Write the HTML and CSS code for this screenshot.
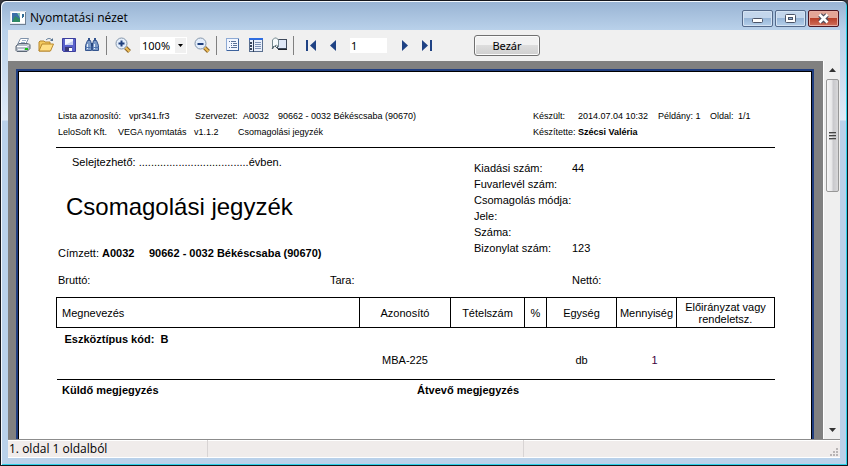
FILE: index.html
```html
<!DOCTYPE html>
<html lang="hu">
<head>
  <meta charset="UTF-8">
  <meta name="viewport" content="width=device-width, initial-scale=1.0">
  <title>Nyomtatási nézet</title>
  <link rel="stylesheet" href="styles.css">
</head>
<body>
  <div class="window">
    <header class="titlebar">
      <svg class="app-icon" width="16" height="14" viewBox="0 0 16 14">
        <rect x="0.5" y="0.5" width="15" height="12" fill="#fff" stroke="#e4e8ee"/>
        <path d="M0 13.500h16M15.500 1v13" stroke="#6e7f92"/>
        <rect x="2" y="2" width="8" height="9" fill="#3b6fa8"/>
        <path d="M2 11l3-6 5 3v3z" fill="#2f8a64"/>
        <path d="M7 2h3v5z" fill="#7fbfae"/>
        <path d="M12 3h2v3h-1v1h-1z" fill="#2f6a94"/>
      </svg>
      <h1 class="window-title">Nyomtatási nézet</h1>
      <div class="window-buttons">
        <button class="win-btn" aria-label="Kis méret">
          <svg width="29" height="15" viewBox="0 0 29 15"><rect x="9.500" y="7.500" width="10" height="4" rx="1" fill="#fff" stroke="#4b5468"/></svg>
        </button>
        <button class="win-btn" aria-label="Teljes méret">
          <svg width="29" height="15" viewBox="0 0 29 15"><rect x="9.500" y="3.500" width="10" height="8" rx="1" fill="#fff" stroke="#4b5468"/><rect x="12.500" y="6.500" width="4" height="2" fill="#8fb0d4" stroke="#4b5468"/></svg>
        </button>
        <button class="win-btn win-close" aria-label="Bezárás">
          <svg width="29" height="15" viewBox="0 0 29 15"><path d="M11 4l7 7M18 4l-7 7" stroke="#4b4a5a" stroke-width="5"/><path d="M10.500 3.500l8 8M18.500 3.500l-8 8" stroke="#fff" stroke-width="2.600"/></svg>
        </button>
      </div>
    </header>

    <nav class="toolbar">
      <button class="tool" aria-label="Nyomtatás">
        <svg width="16" height="16" viewBox="0 0 16 16">
          <path d="M5.500 1.500h8l-3 6h-8z" fill="#fff" stroke="#7f92aa"/>
          <path d="M7 3.500h4M6 5.500h4" stroke="#9db2ca"/>
          <path d="M1 9l3-2.500h8l3 1v4l-3 3H2l-1-1z" fill="#b4bdc9" stroke="#5b6675"/>
          <path d="M2 9.500h10l2-2" stroke="#fff" fill="none"/>
          <path d="M3 12.500h6" stroke="#f2f4f7"/>
          <rect x="10" y="11" width="3" height="2" fill="#15c415"/>
        </svg>
      </button>
      <button class="tool" aria-label="Megnyitás">
        <svg width="16" height="16" viewBox="0 0 16 16">
          <path d="M1 14V5l1-1h4l1 1h5v9z" fill="#f3c95e" stroke="#b8872c"/>
          <path d="M1 14l3-7h11.500l-3 7z" fill="#ffdf85" stroke="#b8872c"/>
          <path d="M8 3c2-2 4-2 6 0" fill="none" stroke="#55718f"/>
          <path d="M12 4h3V1z" fill="#55718f"/>
        </svg>
      </button>
      <button class="tool" aria-label="Mentés">
        <svg width="16" height="16" viewBox="0 0 16 16">
          <path d="M1.500 1.500h13v13h-12l-1-1z" fill="#5a62cc" stroke="#3c3f9c"/>
          <rect x="4" y="2" width="8" height="6" fill="#f4f7ff"/>
          <path d="M4 8h8V4z" fill="#c9d3f2"/>
          <rect x="4" y="10" width="7" height="4" fill="#3a3b78"/>
          <rect x="8" y="11" width="3" height="3" fill="#fff"/>
        </svg>
      </button>
      <button class="tool" aria-label="Keresés">
        <svg width="16" height="16" viewBox="0 0 16 16">
          <path d="M3.500 3.500h3l1 4v6h-6v-5zM12.500 3.500h-3l-1 4v6h6v-5z" fill="#7b9ac8" stroke="#34558f"/>
          <path d="M4 1h2v2H4zM10 1h2v2h-2z" fill="#34558f"/>
          <path d="M7 6h2v3H7z" fill="#27477f"/>
          <path d="M3.500 7v5M10.500 7v5" stroke="#e4edf9"/>
          <path d="M1.500 10.500h5M9.500 10.500h5" stroke="#4f74b0"/>
        </svg>
      </button>
      <span class="sep"></span>
      <button class="tool" aria-label="Nagyítás">
        <svg width="16" height="16" viewBox="0 0 16 16">
          <path d="M10.500 10.500l4 4" stroke="#8a6428" stroke-width="4"/>
          <path d="M10.500 10.500l4 4" stroke="#eebe58" stroke-width="2"/>
          <circle cx="6.500" cy="6.500" r="5.500" fill="#e4eefb" stroke="#8496aa"/>
          <path d="M3.500 6.500h6M6.500 3.500v6" stroke="#1e3f7c" stroke-width="2"/>
        </svg>
      </button>
      <select class="zoom" aria-label="Nagyítás mértéke">
        <option>100%</option>
      </select>
      <button class="tool" aria-label="Kicsinyítés">
        <svg width="16" height="16" viewBox="0 0 16 16">
          <path d="M10.500 10.500l4 4" stroke="#8a6428" stroke-width="4"/>
          <path d="M10.500 10.500l4 4" stroke="#eebe58" stroke-width="2"/>
          <circle cx="6.500" cy="6.500" r="5.500" fill="#e4eefb" stroke="#8496aa"/>
          <path d="M3.500 7h6" stroke="#1e3f7c" stroke-width="2"/>
        </svg>
      </button>
      <span class="sep"></span>
      <button class="tool" aria-label="Vázlat">
        <svg width="16" height="16" viewBox="0 0 16 16">
          <rect x="1.500" y="1.500" width="12" height="12" fill="#f2f6ff" stroke="#8eaad4"/>
          <path d="M13.500 2v12M2 13.500h12" stroke="#3d629c"/>
          <path d="M4 4.500h1M6 4.500h5M6 6.500h1M8 6.500h4M6 8.500h1M8 8.500h4M4 10.500h1M6 10.500h6" stroke="#587198"/>
        </svg>
      </button>
      <button class="tool" aria-label="Miniatűrök">
        <svg width="16" height="16" viewBox="0 0 16 16">
          <rect x="1.500" y="1.500" width="13" height="13" fill="#e8effb" stroke="#5b7090"/>
          <rect x="1" y="1" width="14" height="2" fill="#2f6de0"/>
          <path d="M5.500 3v12" stroke="#2d3d58"/>
          <path d="M2 5h2v2H2zM2 8h2v2H2zM2 11h2v2H2z" fill="#33415a"/>
          <path d="M7 5.500h6M7 7.500h6M7 9.500h6M7 11.500h6" stroke="#7f94b8"/>
        </svg>
      </button>
      <button class="tool" aria-label="Oldalbeállítás">
        <svg width="16" height="16" viewBox="0 0 16 16">
          <rect x="6.500" y="2.500" width="9" height="9" fill="#dfe8f8" stroke="#3f4a5c"/>
          <path d="M7 12.500h9" stroke="#20252e"/>
          <path d="M1.500 12V3l2-2h2l2 2v7l-2-2-2 1z" fill="#f6fafb" stroke="#74888e"/>
          <path d="M1 12l2-3M4 9l3 3" stroke="#4c5d66"/>
        </svg>
      </button>
      <span class="sep"></span>
      <button class="tool" aria-label="Első oldal">
        <svg width="16" height="16" viewBox="0 0 16 16"><path d="M4 3h2v11H4zM14 3v11L8 8.500z" fill="#1f4284"/></svg>
      </button>
      <button class="tool" aria-label="Előző oldal">
        <svg width="16" height="16" viewBox="0 0 16 16"><path d="M11 3v11L5 8.500z" fill="#1f4284"/></svg>
      </button>
      <input class="page-no" type="text" value="1" aria-label="Oldalszám">
      <button class="tool" aria-label="Következő oldal">
        <svg width="16" height="16" viewBox="0 0 16 16"><path d="M5 3v11l6-5.500z" fill="#1f4284"/></svg>
      </button>
      <button class="tool" aria-label="Utolsó oldal">
        <svg width="16" height="16" viewBox="0 0 16 16"><path d="M2 3v11l6-5.500zM10 3h2v11h-2z" fill="#1f4284"/></svg>
      </button>
      <button class="close-btn">Bezár</button>
    </nav>

    <div class="preview">
      <main class="workspace">
        <article class="page">
          <header class="page-head">
            <div class="head-left">
              <div class="row row-list">
                <span>Lista azonosító:</span><span>vpr341.fr3</span><span>Szervezet:</span><span>A0032</span><span>90662 - 0032 Békéscsaba (90670)</span>
              </div>
              <div class="row row-soft">
                <span>LeloSoft Kft.</span><span>VEGA nyomtatás</span><span>v1.1.2</span><span>Csomagolási jegyzék</span>
              </div>
            </div>
            <div class="head-right">
              <div class="row row-made">
                <span>Készült:</span><span>2014.07.04 10:32</span><span>Példány: 1</span><span>Oldal:</span><span>1/1</span>
              </div>
              <div class="row row-made">
                <span>Készítette:</span><b>Szécsi Valéria</b>
              </div>
            </div>
          </header>

          <section class="info">
            <div class="info-left">
              <p class="discard">Selejtezhető: ....................................évben.</p>
              <h2 class="doc-title">Csomagolási jegyzék</h2>
              <p class="recipient"><span>Címzett:</span><b>A0032</b><b>90662 - 0032 Békéscsaba (90670)</b></p>
            </div>
            <dl class="details">
              <dt>Kiadási szám:</dt><dd>44</dd>
              <dt>Fuvarlevél szám:</dt><dd></dd>
              <dt>Csomagolás módja:</dt><dd></dd>
              <dt>Jele:</dt><dd></dd>
              <dt>Száma:</dt><dd></dd>
              <dt>Bizonylat szám:</dt><dd>123</dd>
            </dl>
          </section>

          <div class="weights">
            <span>Bruttó:</span><span>Tara:</span><span>Nettó:</span>
          </div>

          <table class="items">
            <colgroup>
              <col>
              <col class="col-id">
              <col class="col-no">
              <col class="col-pct">
              <col class="col-unit">
              <col class="col-qty">
              <col class="col-plan">
            </colgroup>
            <thead>
              <tr>
                <th class="name">Megnevezés</th>
                <th>Azonosító</th>
                <th>Tételszám</th>
                <th>%</th>
                <th>Egység</th>
                <th>Mennyiség</th>
                <th>Előirányzat vagy rendeletsz.</th>
              </tr>
            </thead>
            <tbody>
              <tr class="group">
                <td colspan="7">Eszköztípus kód:&nbsp; B</td>
              </tr>
              <tr class="item">
                <td></td>
                <td>MBA-225</td>
                <td></td>
                <td></td>
                <td>db</td>
                <td class="qty">1</td>
                <td></td>
              </tr>
            </tbody>
          </table>

          <div class="notes">
            <b>Küldő megjegyzés</b><b>Átvevő megjegyzés</b>
          </div>
        </article>
      </main>
      <div class="scrollbar">
        <button class="scroll-btn" aria-label="Fel"><svg width="7" height="4" viewBox="0 0 7 4"><path d="M0 4l3.500-4L7 4z" fill="#333"/></svg></button>
        <div class="thumb"><i></i><i></i><i></i></div>
        <button class="scroll-btn scroll-down" aria-label="Le"><svg width="7" height="4" viewBox="0 0 7 4"><path d="M0 0l3.500 4L7 0z" fill="#333"/></svg></button>
      </div>
    </div>

    <footer class="statusbar">
      <span class="status-pages">1. oldal 1 oldalból</span>
      <span class="status-mid"></span>
      <span class="status-end"></span>
      <svg class="grip" width="9" height="9" viewBox="0 0 9 9"><path d="M6 0h2v2H6zM3 3h2v2H3zM6 3h2v2H6zM0 6h2v2H0zM3 6h2v2H3zM6 6h2v2H6z" fill="#b9b5b5"/></svg>
    </footer>
  </div>
</body>
</html>
```
FILE: styles.css
```css
* {
  box-sizing: border-box;
}
body {
  margin: 0;
  background: #3a3a40;
  font-family: "Liberation Sans", Arial, sans-serif;
  font-size: 11px;
  color: #000;
}
button {
  padding: 0;
  border: none;
  background: none;
  font: inherit;
  color: inherit;
}
p, h1, h2, dl, dd {
  margin: 0;
}

/* window frame */
.window {
  display: flex;
  flex-direction: column;
  height: 100vh;
  padding: 0 7px 7px;
  border: 1px solid #14161c;
  border-radius: 6px 6px 0 0;
  background: linear-gradient(#98b3d3, #b9d1ea 29px, #dfeaf7 119px, #b9d1ea 120px);
  box-shadow: inset 1px 1px 0 #f4f8fc, inset -1px -1px 0 #2cd0e8;
}
.titlebar {
  display: flex;
  flex: none;
  align-items: center;
  height: 29px;
  padding: 5px 1px 0 2px;
}
.window-title {
  flex: 1;
  margin-left: 4px;
  font: 12px/16px "Open Sans", "Noto Sans", sans-serif;
}
.window-buttons {
  display: flex;
  gap: 2px;
}
.win-btn {
  width: 31px;
  height: 17px;
  border: 1px solid #54698a;
  border-radius: 2px;
  background: linear-gradient(#c3d6ec 45%, #97b6d8 50%, #b5cfea);
  box-shadow: inset 0 0 0 1px #d4e3f3;
}
.win-btn svg {
  display: block;
}
.win-close {
  border-color: #4d1622;
  background: linear-gradient(#e3a597 45%, #b8402a 50%, #d0705c);
  box-shadow: inset 0 0 0 1px #e7ada2;
}

/* toolbar */
.toolbar {
  display: flex;
  flex: none;
  align-items: center;
  height: 31px;
  padding: 0 3px;
  background: #f0f0f0;
}
.tool {
  width: 23px;
  height: 22px;
  padding-bottom: 2px;
}
.tool svg {
  display: block;
  margin: 0 auto;
}
.sep {
  width: 1px;
  height: 19px;
  margin: 0 4px 0 3px;
  background: #808080;
}
.zoom {
  width: 47px;
  height: 17px;
  margin: 0 3px 0 6px;
  padding: 0 0 0 1px;
  border: 1px solid #fff;
  border-radius: 0;
  appearance: none;
  background: url("data:image/svg+xml,%3Csvg xmlns='http://www.w3.org/2000/svg' width='11' height='15'%3E%3Cpath fill='%23f0f0f0' d='M0 0h11v15H0z'/%3E%3Cpath d='M3 6h5L5.500 9z'/%3E%3C/svg%3E") right center no-repeat #fff;
  font-family: "Noto Sans", sans-serif;
  font-size: 11px;
  line-height: 15px;
  color: #000;
}
.page-no {
  width: 37px;
  height: 15px;
  margin: 0 6px;
  padding: 0 1px;
  border: none;
  background: #fff;
  font-family: "Noto Sans", sans-serif;
  font-size: 11px;
  line-height: 15px;
}
.close-btn {
  width: 66px;
  height: 21px;
  margin-left: 35px;
  border: 1px solid #707070;
  border-radius: 3px;
  background: linear-gradient(#f2f2f2 48%, #dddddd 50%, #cfcfcf);
  box-shadow: inset 0 0 0 1px #fbfbfb;
  font-family: "Noto Sans", sans-serif;
}

/* preview area */
.preview {
  display: flex;
  flex: 1;
  min-height: 0;
}
.workspace {
  display: flex;
  flex: 1;
  overflow: hidden;
  padding: 8px 9px 0 8px;
  background: #808080;
}
.page {
  flex: 1;
  padding: 37px 37px 0 38px;
  border: 2px solid #1f3d7f;
  border-bottom: none;
  background: #fff;
  box-shadow: inset 1px 1px 0 #000, inset -1px 0 0 #000;
  line-height: 16px;
}
.scrollbar {
  display: flex;
  flex-direction: column;
  width: 17px;
  padding: 0 1px 0 2px;
  border-left: 1px solid #fff;
  background: #efefef;
}
.scroll-btn {
  height: 18px;
}
.scroll-btn svg {
  display: block;
  margin: 0 auto;
}
.scroll-down {
  margin-top: auto;
}
.thumb {
  display: flex;
  flex-direction: column;
  align-items: center;
  justify-content: center;
  gap: 1px;
  height: 30%;
  border: 1px solid #979797;
  border-radius: 2px;
  background: linear-gradient(to right, #f6f6f6, #e6e6e8 45%, #c8c8cc 55%, #d8d8da);
}
.thumb i {
  width: 7px;
  height: 2px;
  border-top: 1px solid #444;
  border-bottom: 1px solid #aaa;
}

/* printed page */
.page-head {
  display: flex;
  padding: 0 0 7px 2px;
  border-bottom: 1px solid #000;
  font-size: 9px;
}
.head-left {
  flex: 1;
}
.head-right {
  width: 242px;
}
.row {
  display: grid;
  white-space: nowrap;
}
.row-list {
  grid-template-columns: 71px 66px 48px 35px auto;
}
.row-soft {
  grid-template-columns: 60px 76px 44px auto;
}
.row-made {
  grid-template-columns: 45px 80px 52px 28px auto;
}
.info {
  display: flex;
  justify-content: space-between;
}
.info-left {
  padding: 6px 0 0 2px;
}
.discard {
  padding-left: 14px;
}
.doc-title {
  padding: 23px 0 24px 8px;
  font-size: 24px;
  font-weight: normal;
  line-height: 28px;
}
.recipient {
  display: grid;
  grid-template-columns: 44px 47px auto;
}
.details {
  display: grid;
  grid-template-columns: 98px auto;
  grid-auto-rows: 16px;
  align-content: start;
  width: 301px;
  padding-top: 12px;
}
.weights {
  display: grid;
  grid-template-columns: 272px 1fr 203px;
  padding: 11px 0 9px 2px;
}
.items {
  width: 100%;
  border-collapse: collapse;
  table-layout: fixed;
  border-bottom: 1px solid #000;
  line-height: 12px;
}
.col-id { width: 91px; }
.col-no { width: 74px; }
.col-pct { width: 22px; }
.col-unit { width: 70px; }
.col-qty { width: 60px; }
.col-plan { width: 98px; }
.items th {
  height: 30px;
  padding: 0;
  border: 1px solid #000;
  font-weight: normal;
}
.items .name {
  padding-left: 5px;
  text-align: left;
}
.items td {
  padding: 0;
  text-align: center;
}
.items .group td {
  height: 23px;
  padding-left: 8px;
  font-weight: bold;
  text-align: left;
}
.items .item td {
  height: 29px;
  padding-top: 3px;
  vertical-align: top;
}
.items .item .qty {
  padding-right: 19px;
  text-align: right;
  color: #400040;
}
.notes {
  display: grid;
  grid-template-columns: 355px auto;
  padding: 2px 0 0 6px;
}

/* status bar */
.statusbar {
  display: flex;
  flex: none;
  align-items: stretch;
  height: 19px;
  border-top: 1px solid #8c8c8c;
  border-bottom: 1px solid #fff;
  background: #f0eceb;
  box-shadow: inset 0 1px 0 #fff;
  font: 12px/18px "Open Sans", "Noto Sans", sans-serif;
}
.status-pages {
  width: 200px;
  padding-left: 1px;
  border-right: 1px solid #d8d4d4;
}
.status-mid {
  width: 316px;
  border-right: 1px solid #d8d4d4;
}
.status-end {
  flex: 1;
}
.grip {
  align-self: flex-end;
  margin-right: 1px;
}
```
